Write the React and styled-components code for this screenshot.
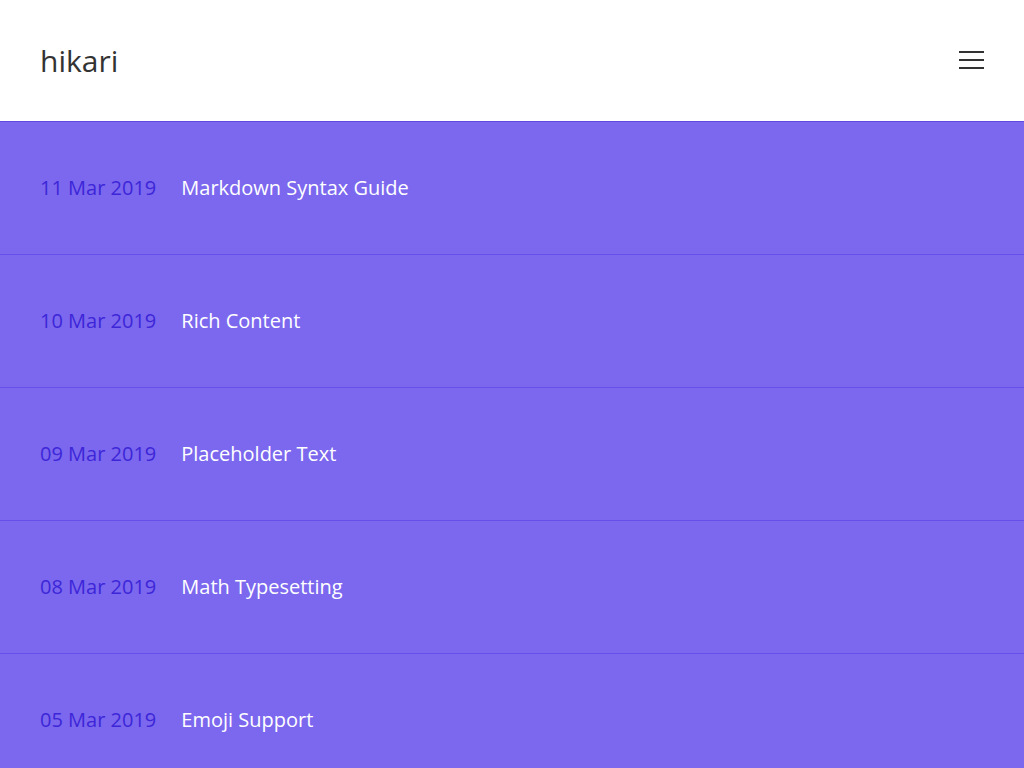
import React from "react";
import styled, { createGlobalStyle } from "styled-components";

const Global = createGlobalStyle`
  html, body { margin: 0; padding: 0; background: #7b68ee; }
  body { font-family: "Open Sans", "Liberation Sans", sans-serif; }
  * { box-sizing: border-box; }
`;

const Header = styled.header`
  height: 122px;
  background: #ffffff;
  border-bottom: 1px solid #5f49e0;
  display: flex;
  align-items: center;
  justify-content: space-between;
  padding: 0 40px;
`;

const Logo = styled.a`
  font-size: 30px;
  color: #333333;
  text-decoration: none;
  line-height: 1;
  margin-top: 0;
`;

const Burger = styled.button`
  width: 25px;
  height: 18px;
  padding: 0;
  border: none;
  background: transparent;
  display: flex;
  flex-direction: column;
  justify-content: space-between;
  margin-top: -2px;
  & > span {
    display: block;
    height: 2px;
    background: #333333;
  }
`;

const List = styled.ul`
  list-style: none;
  margin: 0;
  padding: 0;
`;

const Row = styled.li`
  height: 133px;
  border-bottom: 1px solid #6650ea;
  display: flex;
  align-items: center;
  padding: 0 40px 2px;
  font-size: 20px;
  gap: 25px;
`;

const DateText = styled.time`
  color: #3d26d8;
`;

const Title = styled.a`
  color: #ffffff;
  text-decoration: none;
`;

const posts = [
  ["11 Mar 2019", "Markdown Syntax Guide"],
  ["10 Mar 2019", "Rich Content"],
  ["09 Mar 2019", "Placeholder Text"],
  ["08 Mar 2019", "Math Typesetting"],
  ["05 Mar 2019", "Emoji Support"],
];

export default function App() {
  return (
    <>
      <Global />
      <Header>
        <Logo href="#">hikari</Logo>
        <Burger aria-label="menu">
          <span />
          <span />
          <span />
        </Burger>
      </Header>
      <List>
        {posts.map(([d, t]) => (
          <Row key={t}>
            <DateText>{d}</DateText>
            <Title href="#">{t}</Title>
          </Row>
        ))}
      </List>
    </>
  );
}
